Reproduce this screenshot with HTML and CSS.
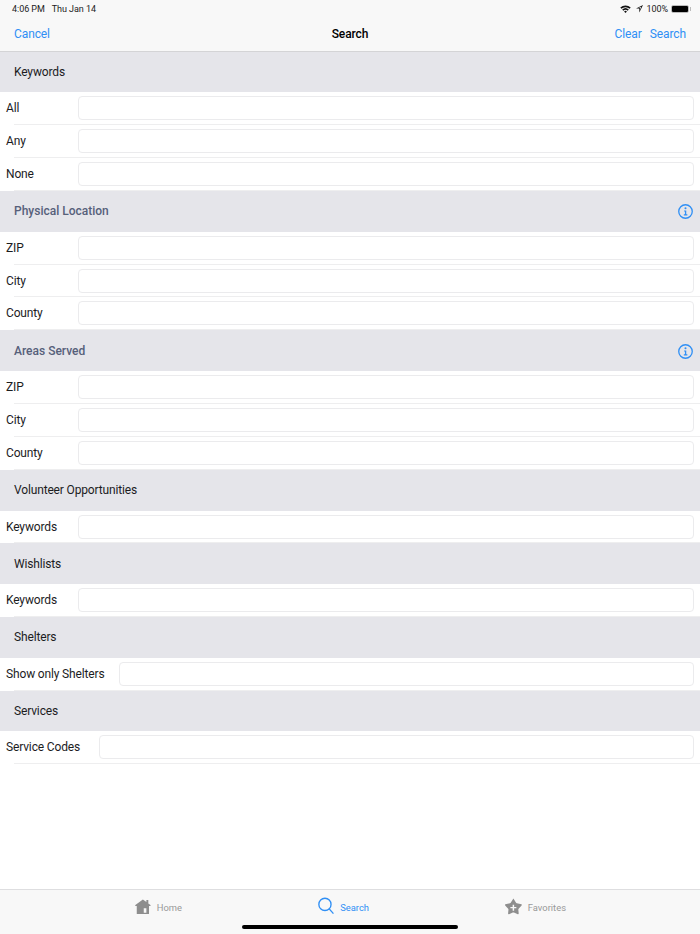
FILE: index.html
```html
<!DOCTYPE html>
<html>
<head>
  <meta charset="UTF-8">
  <title>Search</title>
  <link rel="stylesheet" href="styles.css">
</head>
<body>
  <div id="app">
    <div class="status">
      <span class="status-time">4:06 PM</span>
      <span class="status-date">Thu Jan 14</span>
      <span class="status-right">
        <svg class="wifi" width="11" height="8" viewBox="0 0 11 8"><path d="M0.3 2.6A7.6 7.6 0 0 1 10.7 2.6L9.6 3.8A6 6 0 0 0 1.4 3.8Z"/><path d="M2.2 4.6A4.8 4.8 0 0 1 8.8 4.6L7.7 5.7A3.2 3.2 0 0 0 3.3 5.7Z"/><path d="M4.1 6.5A2 2 0 0 1 6.9 6.5L5.5 8Z"/></svg>
        <svg class="gps" width="7" height="8" viewBox="0 0 7 8"><path fill-rule="evenodd" d="M7 0L0 3.6H3.3V7.6ZM5.2 1.8L2.6 3.1H4V4.8Z"/></svg>
        <span>100%</span>
        <span class="battery"><span class="battery-fill"></span></span>
      </span>
    </div>
    <div class="nav">
      <a class="nav-link">Cancel</a>
      <div class="nav-title">Search</div>
      <div class="nav-right">
        <a class="nav-link">Clear</a>
        <a class="nav-link">Search</a>
      </div>
    </div>

    <div class="form">
      <div class="head">Keywords</div>
      <div class="row"><label>All</label><div class="input"></div></div>
      <div class="row"><label>Any</label><div class="input"></div></div>
      <div class="row"><label>None</label><div class="input"></div></div>

      <div class="head link">Physical Location
        <svg class="info" width="15" height="15" viewBox="0 0 16 16"><circle cx="8" cy="8" r="7.2" fill="none" stroke="#2f8ff5" stroke-width="1.4"/><circle cx="8" cy="4.6" r="1.1" fill="#2f8ff5"/><path d="M6.5 6.8H8.8V11H10V12.2H6.2V11H7.4V8H6.5Z" fill="#2f8ff5"/></svg>
      </div>
      <div class="row"><label>ZIP</label><div class="input"></div></div>
      <div class="row"><label>City</label><div class="input"></div></div>
      <div class="row"><label>County</label><div class="input"></div></div>

      <div class="head link">Areas Served
        <svg class="info" width="15" height="15" viewBox="0 0 16 16"><circle cx="8" cy="8" r="7.2" fill="none" stroke="#2f8ff5" stroke-width="1.4"/><circle cx="8" cy="4.6" r="1.1" fill="#2f8ff5"/><path d="M6.5 6.8H8.8V11H10V12.2H6.2V11H7.4V8H6.5Z" fill="#2f8ff5"/></svg>
      </div>
      <div class="row"><label>ZIP</label><div class="input"></div></div>
      <div class="row"><label>City</label><div class="input"></div></div>
      <div class="row"><label>County</label><div class="input"></div></div>

      <div class="head">Volunteer Opportunities</div>
      <div class="row"><label>Keywords</label><div class="input"></div></div>

      <div class="head">Wishlists</div>
      <div class="row"><label>Keywords</label><div class="input"></div></div>

      <div class="head">Shelters</div>
      <div class="row"><label class="wide">Show only Shelters</label><div class="input"></div></div>

      <div class="head">Services</div>
      <div class="row"><label class="mid">Service Codes</label><div class="input"></div></div>
    </div>

    <div class="tabs">
      <div class="tab tab-home">
        <svg width="17" height="17" viewBox="0 0 18 17"><path fill-rule="evenodd" d="M9 0.5L13 3.4V1.2H15.2V5L18 7.2L17.3 8H16V17H2V8H0.7L0 7.2ZM10 10.5V15.5H13V10.5Z" fill="#8e8e8e"/></svg>
        <span>Home</span>
      </div>
      <div class="tab tab-search on">
        <svg width="17" height="18" viewBox="0 0 17 18"><circle cx="7.3" cy="7.3" r="6.4" fill="none" stroke="#2f8ff5" stroke-width="1.4"/><path d="M11.8 12L16.2 17" stroke="#2f8ff5" stroke-width="1.4" fill="none"/></svg>
        <span>Search</span>
      </div>
      <div class="tab tab-fav">
        <svg width="18" height="17" viewBox="0 0 18 17"><path fill-rule="evenodd" d="M9 0L11.7 4.2Q12 4.8 12.7 5L17.6 6.2Q18.4 6.6 17.8 7.3L14.6 11Q14.2 11.5 14.3 12.1L14.7 16Q14.6 17 13.7 16.7L9.6 15Q9 14.8 8.4 15L4.3 16.7Q3.4 17 3.3 16L3.7 12.1Q3.8 11.5 3.4 11L0.2 7.3Q-0.4 6.6 0.4 6.2L5.3 5Q6 4.8 6.3 4.2ZM8.2 6.5V9H5.8V10.5H8.2V13H9.8V10.5H12.2V9H9.8V6.5Z" fill="#8e8e8e"/></svg>
        <span>Favorites</span>
      </div>
      <div class="home-bar"></div>
    </div>
  </div>
</body>
</html>
```

FILE: styles.css
```css
* {
  margin: 0;
  padding: 0;
  box-sizing: border-box;
}
body {
  font-family: Roboto, "Liberation Sans", sans-serif;
  background: #fff;
  color: #1c1c1e;
}
#app {
  width: 700px;
  height: 934px;
  display: flex;
  flex-direction: column;
  overflow: hidden;
}
.status {
  height: 18px;
  padding: 0 11px 1px 12px;
  display: flex;
  align-items: center;
  gap: 7px;
  background: #f8f8f8;
  font-size: 9px;
  letter-spacing: -0.05px;
  color: #222;
}
.status-right {
  margin-left: auto;
  display: flex;
  align-items: center;
  gap: 3px;
}
.status-right svg {
  fill: #111;
}
.gps {
  margin-left: 2px;
}
.battery {
  width: 18px;
  height: 8px;
  border: 1px solid #bbb;
  border-radius: 2px;
  display: block;
  position: relative;
}
.battery::after {
  content: "";
  position: absolute;
  right: -3px;
  top: 1px;
  width: 1px;
  height: 4px;
  background: #bbb;
}
.battery-fill {
  display: block;
  height: 100%;
  background: #000;
  border-radius: 1px;
}
.nav {
  height: 33.5px;
  padding: 0 14px;
  display: flex;
  align-items: center;
  justify-content: space-between;
  position: relative;
  background: #f8f8f8;
  border-bottom: 1px solid #d4d4d6;
  font-size: 12px;
  letter-spacing: -0.1px;
}
.nav-link {
  color: #2f8ff5;
}
.nav-title {
  position: absolute;
  left: 0;
  right: 0;
  text-align: center;
  font-weight: 500;
  color: #000;
}
.nav-right {
  display: flex;
  gap: 8px;
  position: relative;
}
.form {
  flex: 1;
}
.head {
  height: 40.7px;
  padding: 0 7px 0 14px;
  display: flex;
  align-items: center;
  justify-content: space-between;
  background: #e5e5ea;
  font-size: 12px;
  letter-spacing: -0.15px;
}
.head.link {
  color: #56607a;
  font-weight: 500;
  letter-spacing: 0;
}
.head .info {
  margin-top: 1px;
}
.row {
  height: 32.93px;
  padding: 4px 6px 0;
  display: flex;
  align-items: flex-start;
  position: relative;
  font-size: 12px;
  letter-spacing: -0.15px;
}
.row::after {
  content: "";
  position: absolute;
  left: 14px;
  right: 0;
  bottom: 0;
  height: 1px;
  background: #eeeeef;
}
.row label {
  width: 72px;
  height: 24px;
  line-height: 25px;
  flex: none;
}
.row label.wide {
  width: 113px;
}
.row label.mid {
  width: 92.5px;
}
.input {
  flex: 1;
  height: 24px;
  background: #fff;
  border: 1px solid #ebebed;
  border-radius: 4px;
}
.tabs {
  height: 45px;
  padding: 0 0 9px 135px;
  display: flex;
  gap: 136px;
  align-items: center;
  position: relative;
  background: #f8f8f8;
  border-top: 1px solid #dedee0;
  font-size: 9.4px;
  color: #999;
}
.tab {
  display: flex;
  align-items: center;
  gap: 6px;
}
.tab svg {
  margin-bottom: 3px;
}
.tab-home {
  width: 47px;
}
.tab-search {
  width: 51px;
}
.tab-fav {
  width: 61px;
}
.tab.on {
  color: #2f8ff5;
}
.home-bar {
  position: absolute;
  left: 242px;
  bottom: 5px;
  width: 216px;
  height: 4px;
  border-radius: 2px;
  background: #000;
}
```
